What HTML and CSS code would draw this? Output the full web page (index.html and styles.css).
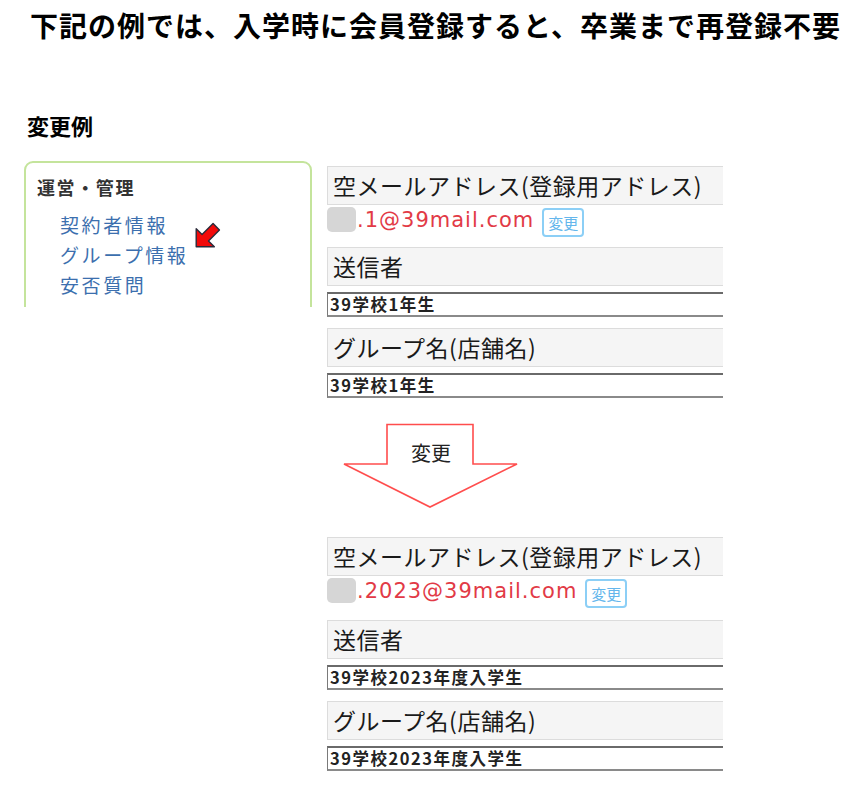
FILE: index.html
```html
<!DOCTYPE html>
<html lang="ja">
<head>
<meta charset="utf-8">
<title>変更例</title>
<link rel="stylesheet" href="styles.css">
</head>
<body>
<h1 class="title">下記の例では、入学時に会員登録すると、卒業まで再登録不要</h1>
<h2 class="subtitle">変更例</h2>
<div class="main">
  <div class="side-clip">
    <div class="side-box">
      <div class="side-head">運営・管理</div>
      <ul class="side-links">
        <li>契約者情報</li>
        <li class="marked">グループ情報
          <svg class="red-arrow" width="32" height="32" viewBox="0 0 30 30"><polygon points="3,27 3,10 8.5,15.5 18.8,5.2 24.8,11.2 14.5,21.5 20,27" fill="#f20a0a" stroke="#2a2a3a" stroke-width="1.3" stroke-linejoin="round"/></svg>
        </li>
        <li>安否質問</li>
      </ul>
    </div>
  </div>
  <div class="panel">
    <section class="form">
      <div class="label">空メールアドレス(登録用アドレス)</div>
      <div class="mail-row"><span class="blur"></span><span class="mail">.1@39mail.com</span><span class="btn">変更</span></div>
      <div class="label">送信者</div>
      <input class="field" type="text" value="39学校1年生" readonly>
      <div class="label">グループ名(店舗名)</div>
      <input class="field" type="text" value="39学校1年生" readonly>
    </section>
    <div class="arrow-wrap">
      <svg width="178" height="88" viewBox="0 0 178 88">
        <polygon points="45,1.5 131,1.5 131,41 175,41 88,84 2,41 45,41" fill="#fff" stroke="#ff4d4d" stroke-width="1.6" stroke-linejoin="miter"/>
        <text x="89" y="38" text-anchor="middle" class="arrow-text">変更</text>
      </svg>
    </div>
    <section class="form form-after">
      <div class="label">空メールアドレス(登録用アドレス)</div>
      <div class="mail-row"><span class="blur"></span><span class="mail">.2023@39mail.com</span><span class="btn">変更</span></div>
      <div class="label">送信者</div>
      <input class="field" type="text" value="39学校2023年度入学生" readonly>
      <div class="label">グループ名(店舗名)</div>
      <input class="field" type="text" value="39学校2023年度入学生" readonly>
    </section>
  </div>
</div>
</body>
</html>
```
FILE: styles.css
```css
html, body {
  margin: 0;
  padding: 0;
  background: #fff;
}
body {
  font-family: "Noto Sans CJK JP", "Noto Sans", sans-serif;
  color: #111;
  width: 866px;
  height: 793px;
  overflow: hidden;
}
.title {
  margin: 0;
  padding: 11px 0 0 30px;
  font-size: 28px;
  line-height: 28px;
  font-weight: 700;
  letter-spacing: 1px;
  color: #000;
  white-space: nowrap;
}
.subtitle {
  margin: 0;
  padding: 75px 0 0 27px;
  font-size: 22px;
  line-height: 22px;
  font-weight: 700;
  color: #000;
}
.main {
  display: flex;
  align-items: flex-start;
  margin-top: 25px;
}
.side-clip {
  margin-left: 24px;
  width: 288px;
  height: 146px;
  overflow: hidden;
  flex: none;
}
.side-box {
  border: 2px solid #c4e49c;
  border-radius: 9px;
  height: 200px;
  padding: 13px 0 0 11px;
  box-sizing: border-box;
}
.side-head {
  font-size: 18px;
  line-height: 22px;
  font-weight: 700;
  color: #333;
  letter-spacing: 1.6px;
}
.side-links {
  list-style: none;
  margin: 12px 0 0 0;
  padding: 0 0 0 23px;
}
.side-links li {
  font-size: 19px;
  line-height: 30px;
  color: #3c6fae;
  letter-spacing: 2.6px;
}
.marked {
  position: relative;
}
.red-arrow {
  position: absolute;
  left: 133px;
  top: -22px;
}
.panel {
  margin-left: 15px;
  width: 396px;
  overflow: hidden;
  flex: none;
  margin-top: 5px;
}
.form {
  display: flex;
  flex-direction: column;
  width: 440px;
}
.label {
  height: 39px;
  box-sizing: border-box;
  background: #f5f5f5;
  border: 1px solid #dcdcdc;
  padding-left: 5px;
  font-size: 23px;
  line-height: 36px;
  letter-spacing: 0.5px;
  color: #1a1a1a;
  white-space: nowrap;
}
.mail-row {
  display: flex;
  align-items: center;
  height: 33px;
  margin: 1px 0 8px 0;
}
.form-after .mail-row {
  margin-bottom: 10px;
}
.blur {
  width: 29px;
  height: 25px;
  border-radius: 5px;
  background: #d6d6d6;
  flex: none;
  margin-top: -6px;
}
.mail {
  font-family: "DejaVu Sans", "Noto Sans", sans-serif;
  font-size: 21px;
  letter-spacing: 1px;
  color: #e23a46;
  margin-left: 1px;
  margin-top: -5px;
}
.btn {
  margin-left: 8px;
  width: 42px;
  height: 29px;
  box-sizing: border-box;
  border: 2px solid #8ccff6;
  border-radius: 4px;
  color: #64b6ec;
  font-size: 15px;
  line-height: 25px;
  text-align: center;
}
.field {
  display: block;
  margin: 6px 0 11px 0;
  height: 25px;
  width: 440px;
  box-sizing: border-box;
  border: 1px solid #7a7a7a;
  border-top: 2px solid #6a6a6a;
  border-bottom: 2px solid #8a8a8a;
  padding: 0 0 1px 2px;
  font-family: "Noto Sans CJK JP", sans-serif;
  font-size: 16.5px;
  line-height: 19px;
  font-weight: 700;
  letter-spacing: 1.5px;
  color: #222;
  background: #fff;
  outline: none;
}
.form .field:last-child {
  margin-bottom: 0;
}
.arrow-wrap {
  height: 139px;
  padding: 25px 0 0 15px;
  box-sizing: border-box;
}
.arrow-text {
  font-family: "Noto Sans CJK JP", sans-serif;
  font-size: 20px;
  fill: #222;
}
```
